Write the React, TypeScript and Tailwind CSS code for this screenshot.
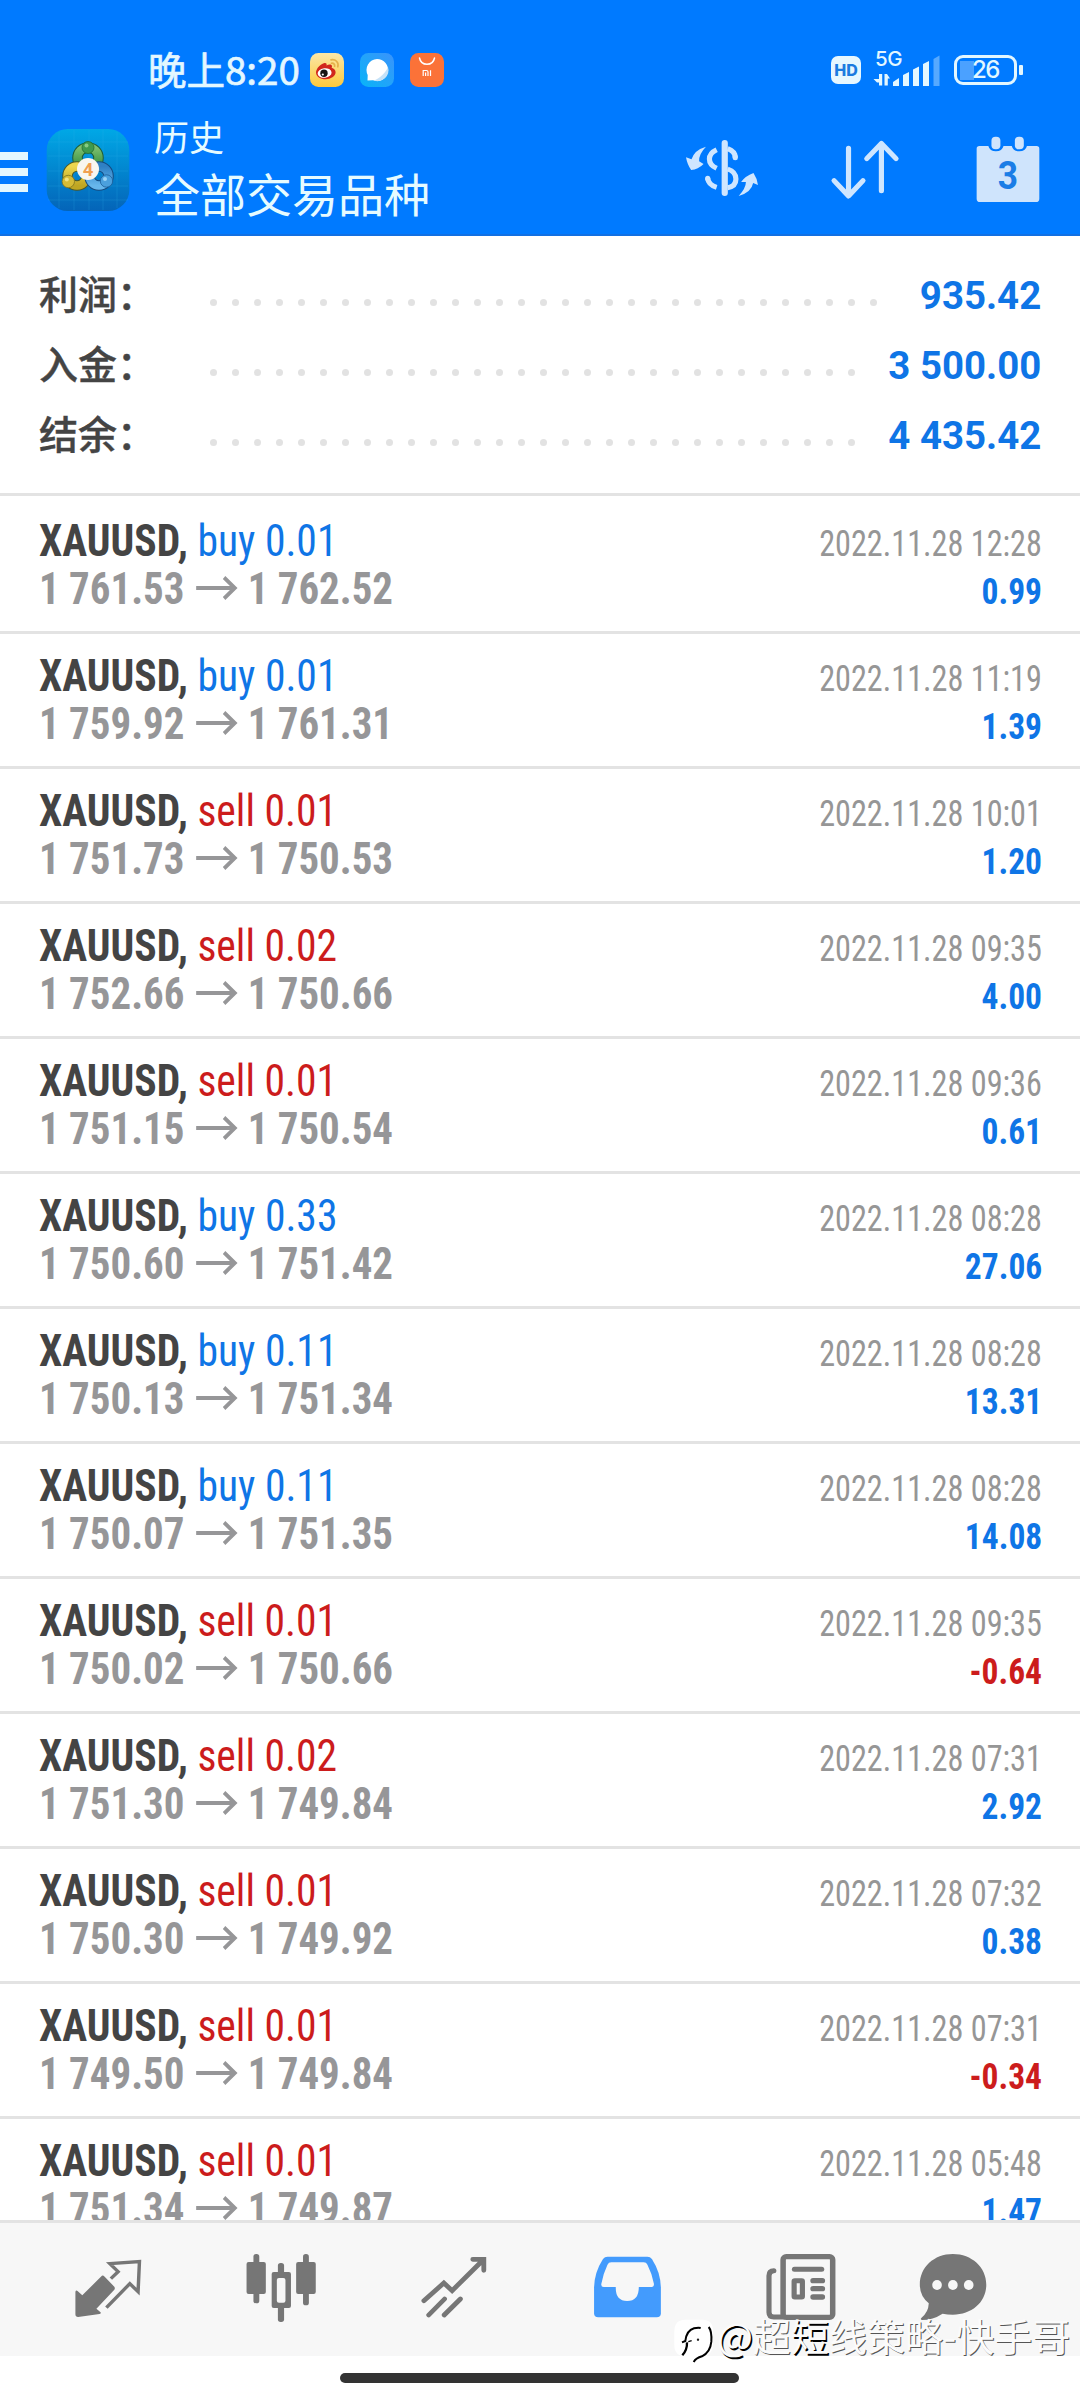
import React from 'react';

type Deal = {
  side: 'buy' | 'sell';
  volume: string;
  open: string;
  close: string;
  time: string;
  profit: string;
};

const deals: Deal[] = [
  { side: 'buy', volume: '0.01', open: '1 761.53', close: '1 762.52', time: '12:28', profit: '0.99' },
  { side: 'buy', volume: '0.01', open: '1 759.92', close: '1 761.31', time: '11:19', profit: '1.39' },
  { side: 'sell', volume: '0.01', open: '1 751.73', close: '1 750.53', time: '10:01', profit: '1.20' },
  { side: 'sell', volume: '0.02', open: '1 752.66', close: '1 750.66', time: '09:35', profit: '4.00' },
  { side: 'sell', volume: '0.01', open: '1 751.15', close: '1 750.54', time: '09:36', profit: '0.61' },
  { side: 'buy', volume: '0.33', open: '1 750.60', close: '1 751.42', time: '08:28', profit: '27.06' },
  { side: 'buy', volume: '0.11', open: '1 750.13', close: '1 751.34', time: '08:28', profit: '13.31' },
  { side: 'buy', volume: '0.11', open: '1 750.07', close: '1 751.35', time: '08:28', profit: '14.08' },
  { side: 'sell', volume: '0.01', open: '1 750.02', close: '1 750.66', time: '09:35', profit: '-0.64' },
  { side: 'sell', volume: '0.02', open: '1 751.30', close: '1 749.84', time: '07:31', profit: '2.92' },
  { side: 'sell', volume: '0.01', open: '1 750.30', close: '1 749.92', time: '07:32', profit: '0.38' },
  { side: 'sell', volume: '0.01', open: '1 749.50', close: '1 749.84', time: '07:31', profit: '-0.34' },
  { side: 'sell', volume: '0.01', open: '1 751.34', close: '1 749.87', time: '05:48', profit: '1.47' },
];

const summary = [
  { label: '利润', value: '935.42', dots: 31 },
  { label: '入金', value: '3 500.00', dots: 30 },
  { label: '结余', value: '4 435.42', dots: 30 },
];

function WeiboIcon() {
  return (
    <svg className="h-[34px] w-[34px]" viewBox="0 0 34 34">
      <defs>
        <linearGradient id="wb" x1="0" y1="0" x2="0" y2="1">
          <stop offset="0" stopColor="#fbe7a8" />
          <stop offset="1" stopColor="#fdc93c" />
        </linearGradient>
      </defs>
      <rect width="34" height="34" rx="8.5" fill="url(#wb)" />
      <path d="M6 19.5c0-4 5-9 8.500-9.500 2-.3 2.500 1 2 2.500 2-1.200 5.500-1.500 5.500.8 0 .9-.4 1.500-.4 1.500 2.500.8 4 2.300 4 4.500 0 4-5 7-10 7S6 23.500 6 19.500z" fill="#d1261c" />
      <ellipse cx="14.600" cy="20" rx="7" ry="4.800" fill="#fff" transform="rotate(-6 14.600 20)" />
      <circle cx="14" cy="20.300" r="3.700" fill="#151515" />
      <circle cx="12.800" cy="21.500" r="1.100" fill="#fff" />
      <path d="M21 6.800c4.500-1 8 2.500 6.800 7M21.500 10.300c2-.5 3.600 1 3.100 3" fill="none" stroke="#e5b04a" strokeWidth="1.700" strokeLinecap="round" />
    </svg>
  );
}

function BrowserIcon() {
  return (
    <svg className="h-[34px] w-[34px]" viewBox="0 0 34 34">
      <defs>
        <linearGradient id="br" x1="1" y1="0" x2="0" y2="1">
          <stop offset="0" stopColor="#3b93fb" />
          <stop offset="1" stopColor="#08b4f8" />
        </linearGradient>
      </defs>
      <rect width="34" height="34" rx="8.500" fill="url(#br)" />
      <path d="M17 6a11 11 0 1 1-4 21.200l-5.500.3.200-5.500A11 11 0 0 1 17 6z" fill="#fff" />
      <path d="M28 14A11 11 0 0 1 14 27.500C20 25 25.500 20 28 14z" fill="#c5e2f8" />
    </svg>
  );
}

function StoreIcon() {
  return (
    <svg className="h-[34px] w-[34px]" viewBox="0 0 34 34">
      <rect width="34" height="34" rx="8.500" fill="#fb7238" />
      <path d="M9.500 5c.8 4 4 6.300 7.500 6.300S23.700 9 24.500 5" fill="none" stroke="#fff" strokeWidth="1.500" strokeLinecap="round" />
      <path d="M13.200 23v-5.500h3.300q1.500 0 1.500 1.500v4M15.600 19.500V23M20.500 17.300V23" fill="none" stroke="#fff" strokeWidth="1.200" />
    </svg>
  );
}

function StatusBar() {
  return (
    <div className="flex h-[116px] items-start pl-[148px] pt-[42px] text-[#e3f7ff]">
      <span className="-mt-[2px] w-[162px] whitespace-nowrap font-['Noto_Sans_CJK_SC',sans-serif] text-[38.5px] leading-[56px] [-webkit-text-stroke:0.7px_#e3f7ff]">晚上8:20</span>
      <div className="mt-[11px] flex gap-4">
        <WeiboIcon />
        <BrowserIcon />
        <StoreIcon />
      </div>
      <div className="ml-[387px] mt-[14px] flex h-[28px] w-[30px] items-center justify-center rounded-[7px] bg-[#e6f7ff] font-[Inter] text-[16px] font-extrabold text-[#1b7be0]">
        HD
      </div>
      <div className="ml-[12px] mt-[6px] flex h-[40px]">
        <div className="relative w-[67px]">
          <span className="absolute left-[2px] top-0 font-[Inter] text-[20.5px] font-medium leading-[22px] tracking-[-0.5px]">5G</span>
          <svg className="h-[40px] w-[67px]" viewBox="873 48 67 40" fill="#e3f7ff">
            <path d="M879 74h3.200v11.500H879v-3h-2L873.500 79h5.500zM884.500 85.500V74h2.500l3 4.500h-2.200v7z" />
            <path d="M893 82l6-4v8h-6zM903 75l6-3v14h-6zM913 69.500l6-3V86h-6zM923 64l6-3v25h-6z" />
            <path d="M933.500 59l6-3.500V86h-6z" opacity=".38" />
          </svg>
        </div>
        <div className="relative ml-[14px] mt-[7px] flex h-[30px] w-[63px] items-center justify-center rounded-[9px] border-[3px] border-[#e3f7ff] bg-[linear-gradient(90deg,transparent_3px,#4ba1ff_3px,#4ba1ff_17px,transparent_17px)] bg-[length:100%_19px] bg-center bg-no-repeat font-[Inter] text-[24px] font-medium tracking-[-1.5px]">
          26
          <span className="absolute -right-[9px] top-[7px] h-[10px] w-[4px] rounded-[1px] bg-[#e3f7ff]" />
        </div>
      </div>
    </div>
  );
}

function AppLogo() {
  return (
    <svg className="ml-[18px] h-[82px] w-[84px]" viewBox="0 0 84 82">
      <defs>
        <linearGradient id="lg" x1="0" y1="0" x2="0" y2="1">
          <stop offset="0" stopColor="#00a8e6" />
          <stop offset="1" stopColor="#0464b8" />
        </linearGradient>
        <linearGradient id="gr" x1="0" y1="0" x2="0" y2="1">
          <stop offset="0" stopColor="#7dc070" />
          <stop offset="1" stopColor="#2f8a3a" />
        </linearGradient>
        <linearGradient id="ye" x1="0" y1="0" x2="0" y2="1">
          <stop offset="0" stopColor="#ecd64e" />
          <stop offset="1" stopColor="#bfa622" />
        </linearGradient>
        <linearGradient id="bl" x1="0" y1="0" x2="0" y2="1">
          <stop offset="0" stopColor="#2f80c4" />
          <stop offset="1" stopColor="#66b6ec" />
        </linearGradient>
      </defs>
      <rect x=".7" width="82.600" height="82" rx="21" fill="url(#lg)" />
      <path d="M13 3v76M28 1v80M43 1v80M57 1v80M71 3v76M2 13h80M2 27h80M2 42h80M2 57h80M2 71h80" stroke="#35b6ec" strokeWidth=".7" opacity=".3" />
      <g fill="none">
        <circle cx="42" cy="29" r="10.500" stroke="#1f5d35" strokeWidth="10.500" />
        <circle cx="42" cy="29" r="10.500" stroke="url(#gr)" strokeWidth="8.500" />
        <circle cx="31" cy="47" r="9.500" stroke="#4e5a28" strokeWidth="10.500" />
        <circle cx="31" cy="47" r="9.500" stroke="url(#ye)" strokeWidth="8.500" />
        <circle cx="53" cy="47" r="9.500" stroke="#154b80" strokeWidth="10.500" />
        <circle cx="53" cy="47" r="9.500" stroke="url(#bl)" strokeWidth="8.500" />
      </g>
      <circle cx="42" cy="18.500" r="6" fill="#3f9a4e" stroke="#246b2f" strokeWidth=".8" />
      <circle cx="40.500" cy="16.500" r="2" fill="#86cb84" />
      <circle cx="22.300" cy="52.500" r="6.200" fill="#d6bc36" stroke="#7e7420" strokeWidth=".8" />
      <circle cx="20.800" cy="50.500" r="2" fill="#f3e382" />
      <circle cx="60.500" cy="52" r="6.200" fill="#4ba0dd" stroke="#1b5d98" strokeWidth=".8" />
      <circle cx="59" cy="50" r="2" fill="#9ad3f6" />
      <circle cx="42" cy="40" r="11" fill="#f8f6f0" />
      <text x="42" y="46.500" textAnchor="middle" fontFamily="Roboto" fontSize="18.500" fontWeight="700" fill="#f0a050">4</text>
    </svg>
  );
}

function Header() {
  return (
    <header className="h-[236px] border-b-2 border-[#1270e2] bg-[#007aff]">
      <StatusBar />
      <div className="flex items-start">
        <div className="mt-[36px] flex w-[28px] flex-col gap-2">
          <span className="h-2 bg-[#e3f7ff]" />
          <span className="h-2 bg-[#e3f7ff]" />
          <span className="h-2 bg-[#e3f7ff]" />
        </div>
        <div className="mt-[13px]">
          <AppLogo />
        </div>
        <div className="ml-[24px] w-[530px] pt-[1px] text-[#e6fbff]">
          <div className="text-[35px] leading-[46px]">历史</div>
          <div className="mt-[1px] text-[46px] leading-[64px]">全部交易品种</div>
        </div>
        <svg className="mt-[16px] h-[72px] w-[76px]" viewBox="418.200 306 220.700 216" preserveAspectRatio="none" fill="#cfe6ff">
          <path d="M482 350q-21 22-20 44l13 8q-16 17-36 18-11-15-15-38l16 6q8-28 42-38z" />
          <path d="M577 498q21-24 21-42l-14 0q12-18 36-27 10 15 13 36l-14-6q-5 28-42 39z" />
          <path d="M513 359q-21 10-21 28t21 28M487 445q2 20 26 27M545 356q22 8 22 27M545 417q24 8 24 30t-24 26" fill="none" stroke="#cfe6ff" strokeWidth="15" />
          <path d="M567 380v3" stroke="#cfe6ff" strokeWidth="15" strokeLinecap="round" />
          <path d="M487 445v1" stroke="#cfe6ff" strokeWidth="15" strokeLinecap="round" />
          <path d="M536.500 339v150" stroke="#cfe6ff" strokeWidth="18" strokeLinecap="round" />
        </svg>
        <svg className="ml-[69px] mt-[16px] h-[72px] w-[72px]" viewBox="839.300 306 209.100 216" preserveAspectRatio="none" fill="none" stroke="#cfe6ff" strokeWidth="15" strokeLinecap="round" strokeLinejoin="round">
          <path d="M896 355v141M854 452l42 46 42-46M991.500 482V343M949 386l42.500-46 42.500 46" />
        </svg>
        <svg className="ml-[71px] mt-[16px] h-[72px] w-[72px]" viewBox="1254.500 306 209.100 216" preserveAspectRatio="none">
          <path d="M1276 348h26q4 16 22 16t22-16h24q4 16 22 16t22-16h28q8 0 8 8v150q0 10-10 10h-162q-10 0-10-10V356q0-8 8-8z" fill="#cfe4fc" />
          <rect x="1311" y="320" width="26" height="38" rx="12" fill="#cfe4fc" />
          <rect x="1379" y="320" width="26" height="38" rx="12" fill="#cfe4fc" />
          <text transform="translate(1359 478) scale(.9 1.020)" textAnchor="middle" fontFamily="Roboto" fontSize="114" fontWeight="700" fill="#1b7de6">3</text>
        </svg>
      </div>
    </header>
  );
}

function Summary() {
  return (
    <section className="h-[260px] border-b-[3px] border-[#e3e3e3] pt-[25px]">
      {summary.map((s) => (
        <div key={s.label} className="flex h-[70px] items-baseline pl-[39px] pr-[39px]">
          <span className="w-[171px] text-[39px] font-medium leading-[70px] text-[#444] [-webkit-text-stroke:0.4px_#444]">{s.label}：</span>
          <span className="flex -translate-y-[3px] gap-[15px]">
            {Array.from({ length: s.dots }, (_, i) => (
              <i key={i} className="h-[7px] w-[7px] rounded-full bg-[#e2e2e2]" />
            ))}
          </span>
          <span className="ml-auto origin-right scale-x-[0.985] text-[39px] font-bold leading-[70px] text-[#0f75e6]">{s.value}</span>
        </div>
      ))}
    </section>
  );
}

function PriceArrow() {
  return (
    <svg className="relative -top-[4px] ml-[12px] mr-[9px] inline-block h-[24px] w-[47px]" viewBox="0 0 47 24" fill="none" stroke="#969698" strokeWidth="4">
      <path d="M1 12h42M31 1.500l11.500 10.500L31 22.500" />
    </svg>
  );
}

function DealRow({ deal }: { deal: Deal }) {
  return (
    <div className="h-[135px] shrink-0 border-b-[3px] border-[#e3e3e3] pl-[39px] pr-[38px] pt-[18px] font-stretch-75%">
      <div className="flex h-[48px] items-baseline justify-between whitespace-nowrap leading-[48px]">
        <div className="origin-left scale-x-[0.945] text-[44px]">
          <span className="font-bold text-[#444]">XAUUSD,</span>{' '}
          <span className={deal.side === 'buy' ? 'text-[#0f75e6]' : 'text-[#cc1c1c]'}>
            {deal.side} {deal.volume}
          </span>
        </div>
        <div className="origin-right scale-x-[0.895] text-[36px] text-[#969696]">2022.11.28 {deal.time}</div>
      </div>
      <div className="flex h-[48px] items-baseline justify-between whitespace-nowrap font-bold leading-[48px]">
        <div className="origin-left scale-x-[0.93] text-[44px] text-[#969698]">
          {deal.open}
          <PriceArrow />
          {deal.close}
        </div>
        <div className={deal.profit.startsWith('-') ? 'origin-right scale-x-[0.93] text-[36px] text-[#cc1c1c]' : 'origin-right scale-x-[0.93] text-[36px] text-[#0f75e6]'}>
          {deal.profit}
        </div>
      </div>
    </div>
  );
}

function BottomNav() {
  const box = 'h-[72px] w-[72px] shrink-0';
  return (
    <nav className="flex h-[136px] gap-[101px] border-t-[3px] border-[#e3e3e3] bg-[#f7f7f7] pl-[72px] pt-[29px]">
      <svg className={box} viewBox="209.100 186 209.100 216" preserveAspectRatio="none">
        <path d="M296 257q4-1 8 3l28 30q3 5 0 9l-52 57 12 11q3 4-3 5l-62 9q-8 0-8-8v-68q2-6 7-1l13 12z" fill="#767676" />
        <path d="M322 266l21-21-24-24 86-6-4 90-24-24-68 72" fill="none" stroke="#767676" strokeWidth="10" />
      </svg>
      <svg className={box} viewBox="711.500 186 209.100 216" preserveAspectRatio="none" fill="#767676">
        <rect x="736" y="192" width="17" height="148" rx="8" />
        <rect x="716" y="216" width="56" height="96" rx="6" />
        <rect x="880" y="192" width="17" height="154" rx="8" />
        <rect x="860" y="216" width="57" height="96" rx="6" />
        <rect x="807" y="219" width="18" height="177" rx="8" />
        <rect x="789" y="246" width="56" height="108" rx="6" />
        <rect x="804" y="264" width="25" height="74" rx="6" fill="#f7f7f7" />
      </svg>
      <svg className={box} viewBox="1213.900 186 209.100 216" preserveAspectRatio="none" fill="none" stroke="#767676" strokeWidth="14" strokeLinecap="round">
        <path d="M1231 332l58-53 24 23 90-92M1373 208h32v33M1245 375l46-48M1290 375l47-48" />
      </svg>
      <svg className={box} viewBox="148.100 186 209.100 216" preserveAspectRatio="none">
        <path d="M196 200h116q8 0 13 7 25 40 26 85v78q0 12-12 12H169q-12 0-12-12v-78q1-45 26-85 5-7 13-7z" fill="#439bfd" />
        <path d="M207 217h94q8 0 11 7 14 28 19 58 0 9-7 9h-37q0 42-34 42t-33-42h-35q-8 0-7-9 5-30 18-58 3-7 11-7z" fill="#f7f7f7" />
      </svg>
      <svg className={box} viewBox="650.500 186 209.100 216" preserveAspectRatio="none" fill="none" stroke="#767676" strokeLinecap="round">
        <path d="M679 242q-14 0-14 15v110q0 14 14 14h30" strokeWidth="15" />
        <rect x="706" y="200" width="144" height="182" rx="9" strokeWidth="16" />
        <path d="M739 238h79" strokeWidth="15" />
        <path d="M793 272h27M793 296h27M793 321h27" strokeWidth="16" />
        <rect x="738" y="272" width="24" height="49" rx="2" strokeWidth="15" />
      </svg>
      <svg className="-ml-[20px] h-[72px] w-[72px] shrink-0" viewBox="1094.800 186 209.100 216" preserveAspectRatio="none">
        <path d="M1199 192c55 0 97 40 97 92s-42 90-97 90q-16 0-30-3-28 19-60 19-6-2-1-7 20-16 21-43-26-22-26-56c0-52 41-92 96-92z" fill="#767676" />
        <g fill="#f7f7f7">
          <ellipse cx="1153" cy="285" rx="14" ry="15" />
          <ellipse cx="1199" cy="285" rx="14" ry="15" />
          <ellipse cx="1245" cy="285" rx="14" ry="15" />
        </g>
      </svg>
    </nav>
  );
}

function Watermark() {
  return (
    <div className="absolute left-[673px] top-[2307px] flex items-start whitespace-nowrap">
      <svg className="mt-[11px] h-[47px] w-[41px]" viewBox="40 55 123 141">
        <path d="M78 60h50q32 0 32 32v48q-4 26-30 33-14 4-24 18-6-18-28-20-34-2-34-34V94q0-34 34-34z" fill="#fff" />
        <g fill="none" stroke="#000">
          <path d="M67 128l10-4q4-32 26-38 12-3 20-1" strokeWidth="6" />
          <path d="M82 128q1 22-14 39" strokeWidth="7" />
          <path d="M86 126l10-3" strokeWidth="4" />
          <path d="M147 82q10 12 8 44-3 32-28 44-18 5-25 17" strokeWidth="6" />
        </g>
        <circle cx="115" cy="120" r="3.500" fill="#222" />
      </svg>
      <span className="ml-[3px] font-['Noto_Sans_CJK_SC',sans-serif] text-[38px] leading-[56px] text-[#fbfbfb] [text-shadow:1px_1px_0_#555]">
        <span className="[text-shadow:1.5px_1.5px_0_#000]">@</span>超<span className="[text-shadow:1.5px_1.5px_0_#000]">短</span>线策略-快手哥
      </span>
    </div>
  );
}

export default function App() {
  return (
    <div className="relative flex h-[2400px] w-[1080px] flex-col overflow-hidden bg-white font-[Roboto,'Noto_Sans_CJK_SC',sans-serif]">
      <Header />
      <Summary />
      <main className="flex h-[1724px] flex-col overflow-hidden pt-[3px]">
        {deals.map((d, i) => (
          <DealRow key={i} deal={d} />
        ))}
      </main>
      <BottomNav />
      <div className="ml-[340px] mt-[17px] h-[10px] w-[399px] rounded-full bg-[#333]" />
      <Watermark />
    </div>
  );
}
